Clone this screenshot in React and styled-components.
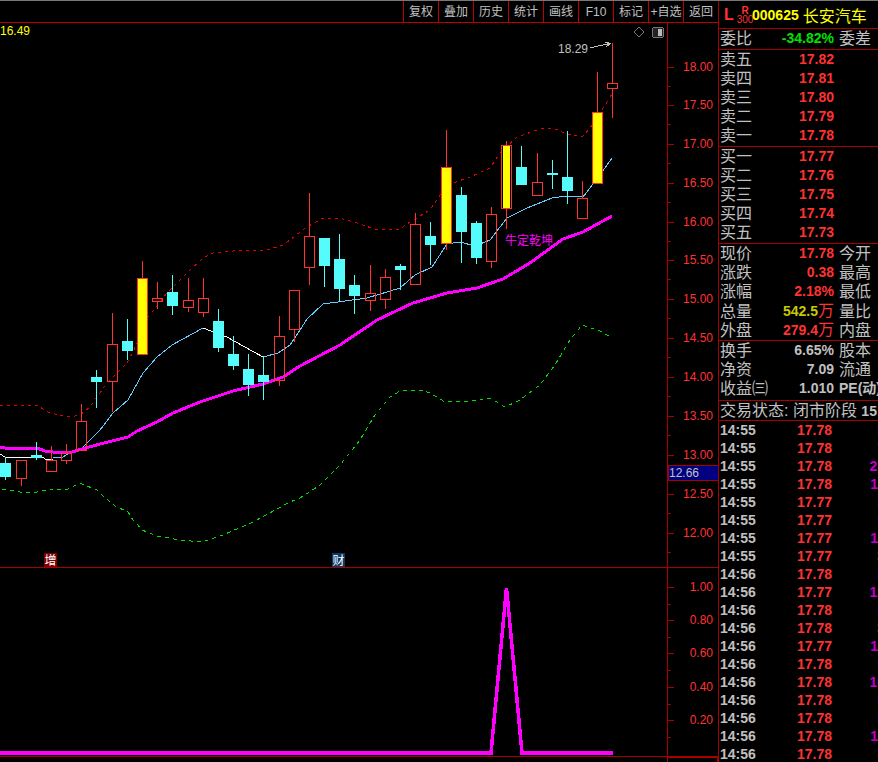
import React from 'react'
import styled, { createGlobalStyle } from 'styled-components'

const SANS = `"Liberation Sans", "Noto Sans CJK SC", sans-serif`
const LINE = '#a80000'
const RED = '#ff3232'
const GREY = '#c0c0c0'

const GlobalStyle = createGlobalStyle`
  html, body { margin: 0; padding: 0; background: #000; }
  body { font-family: ${SANS}; overflow: hidden; }
`

// [x, kind, high, top, bottom, low]  r=hollow red c=cyan y=yellow n=narrow yellow
const candles = [
  [5, 'c', 457, 463, 477, 480], [21, 'r', 460, 460, 478, 486], [36, 'c', 442, 455, 458, 460],
  [51, 'r', 446, 460, 471, 471], [66, 'r', 444, 453, 460, 464], [81, 'r', 404, 421, 450, 450],
  [96, 'c', 370, 377, 382, 408], [112, 'r', 313, 344, 381, 412], [127, 'c', 319, 341, 351, 360],
  [142, 'y', 261, 278, 354, 355], [157, 'r', 282, 298, 301, 309], [172, 'c', 275, 292, 306, 315],
  [188, 'r', 278, 300, 307, 312], [203, 'r', 278, 298, 312, 317], [218, 'c', 309, 321, 348, 352],
  [233, 'c', 336, 354, 366, 370], [248, 'c', 354, 369, 385, 396], [263, 'c', 356, 375, 382, 400],
  [279, 'r', 316, 336, 380, 386], [294, 'r', 290, 290, 329, 342], [309, 'r', 193, 236, 267, 285],
  [324, 'c', 238, 238, 266, 287], [339, 'c', 234, 259, 289, 302], [354, 'c', 275, 285, 296, 314],
  [370, 'r', 265, 293, 300, 311], [385, 'r', 269, 277, 299, 309], [400, 'c', 264, 266, 270, 290],
  [415, 'r', 213, 224, 284, 284], [430, 'c', 222, 236, 245, 265], [446, 'y', 130, 167, 243, 250],
  [461, 'c', 187, 195, 232, 263], [476, 'c', 221, 223, 258, 264], [491, 'r', 207, 214, 261, 268],
  [506, 'n', 141, 145, 208, 229], [521, 'c', 146, 167, 185, 185], [537, 'r', 153, 182, 195, 195],
  [552, 'c', 160, 173, 175, 189], [567, 'c', 131, 177, 191, 204], [582, 'r', 181, 198, 218, 219],
  [597, 'y', 72, 112, 183, 183], [612, 'r', 43, 83, 88, 118],
]

const upperBand = '0,405 37,405 43,409 50,413 70,417 80,415 90,407 107,383 127,363 133,352 148,317 158,305 167,293 187,273 203,258 213,253 233,251 267,250 283,245 290,240 305,228 323,218 340,218 360,224 377,230 400,229 413,220 430,210 440,195 453,183 470,177 490,168 500,153 517,137 540,129 553,128 567,134 582,137 590,128 600,113 612,94'
const lowerBand = '2,489 20,492 37,492 50,489 68,489 80,483 87,486 97,490 103,496 115,506 128,512 133,520 137,524 142,530 157,536 180,540 202,542 223,535 253,522 290,502 300,498 320,485 340,465 360,440 375,415 390,397 400,391 420,390 430,393 445,402 470,401 490,398 505,407 520,400 540,385 555,365 570,340 582,325 600,331 612,338'
const fastLineUp = [
  '53,458 63,457 72,451 82,448 100,430 113,413 128,400 143,373 157,357 172,345 203,328',
  '263,357 278,353 290,345 300,330 307,319 323,304 338,302 367,298 400,288 415,275 432,267 447,244 460,242 475,246 490,240 507,218 527,208 552,198 567,196 583,197 602,172 612,158',
]
const fastLineDown = ['0,454 5,457 43,457 45,459 53,459', '203,328 227,337 243,346 263,357']
const slowLine = '0,447 5,448 37,448 45,451 53,452 72,452 82,449 100,444 128,437 137,431 157,422 173,413 200,402 233,391 263,384 283,377 300,366 340,345 377,320 413,303 447,293 477,288 503,279 530,263 563,239 583,232 612,216'

const priceTicks = [
  ['18.00', 67], ['17.50', 105], ['17.00', 144], ['16.50', 183], ['16.00', 222], ['15.50', 260], ['15.00', 299],
  ['14.50', 338], ['14.00', 377], ['13.50', 416], ['13.00', 455], ['12.50', 494], ['12.00', 533],
]
const subTicks = [['1.00', 587], ['0.80', 620], ['0.60', 653], ['0.40', 687], ['0.20', 720]]

const toolButtons = ['复权', '叠加', '历史', '统计', '画线', 'F10', '标记', '+自选', '返回']
const sells = [['卖五', '17.82'], ['卖四', '17.81'], ['卖三', '17.80'], ['卖二', '17.79'], ['卖一', '17.78']]
const buys = [['买一', '17.77'], ['买二', '17.76'], ['买三', '17.75'], ['买四', '17.74'], ['买五', '17.73']]
const ticks = [
  ['14:55', '17.78', '5'], ['14:55', '17.78', '7'], ['14:55', '17.78', '25'], ['14:55', '17.78', '11'],
  ['14:55', '17.77', '5'], ['14:55', '17.77', '5'], ['14:55', '17.77', '11'], ['14:55', '17.77', '3', true],
  ['14:56', '17.78', '5'], ['14:56', '17.77', '12'], ['14:56', '17.78', '5'], ['14:56', '17.78', '3', true],
  ['14:56', '17.77', '11'], ['14:56', '17.78', '5'], ['14:56', '17.78', '10'], ['14:56', '17.78', '5'],
  ['14:56', '17.78', '5'], ['14:56', '17.78', '11'], ['14:56', '17.78', '7'],
]

const Candle = ({ data }) => {
  const [x, kind, high, top, bottom, low] = data
  const cx = x + 0.5
  if (kind === 'c') {
    return (
      <g>
        <line x1={cx} x2={cx} y1={high} y2={low} stroke="#54fcfc" />
        <rect x={x - 5} y={top} width={11} height={bottom - top} fill="#54fcfc" />
      </g>
    )
  }
  return (
    <g>
      <line x1={cx} x2={cx} y1={high} y2={top} stroke={RED} />
      <line x1={cx} x2={cx} y1={bottom} y2={low} stroke={RED} />
      <rect x={x - 4.5} y={top + 0.5} width={10} height={bottom - top} fill="none" stroke={RED} />
      {kind === 'y' && <rect x={x - 4} y={top + 1} width={9} height={bottom - top - 1} fill="#ffff00" />}
      {kind === 'n' && <rect x={x - 3} y={top + 1} width={7} height={bottom - top - 1} fill="#ffff00" />}
    </g>
  )
}

const AxisTicks = ({ items, minorOffset }) => (
  <g>
    {items.map(([label, y]) => (
      <g key={label}>
        <line x1="668" x2="674" y1={y + 0.5} y2={y + 0.5} stroke={LINE} />
        <line x1="668" x2="671" y1={y + minorOffset + 0.5} y2={y + minorOffset + 0.5} stroke={LINE} />
        <AxisLabel x="713" y={y + 4}>{label}</AxisLabel>
      </g>
    ))}
  </g>
)

const App = () => {
  return (
    <Page>
      <GlobalStyle />
      <ChartColumn>
        <Toolbar>
          {toolButtons.map((b) => <ToolButton key={b}>{b}</ToolButton>)}
        </Toolbar>

        <MainChart viewBox="0 23 718 544" width="718" height="544">
          <Thin points={upperBand} stroke="#e00000" strokeDasharray="3 4" />
          <Thin points={lowerBand} stroke="#00e000" strokeDasharray="4 4" />
          {fastLineUp.map((p) => <Thin key={p} points={p} stroke="#66ccff" />)}
          {fastLineDown.map((p) => <Thin key={p} points={p} stroke="#ffffff" />)}
          <polyline points={slowLine} fill="none" stroke="#ff00ff" strokeWidth="3" />
          {candles.map((c) => <Candle key={c[0]} data={c} />)}

          <line x1="667.5" x2="667.5" y1="23" y2="567" stroke={LINE} />
          <AxisTicks items={priceTicks} minorOffset={19} />
          <rect x="668" y="465.5" width="50" height="15" fill="#000080" stroke={LINE} />
          <ChartText x="669" y="477" fill={GREY}>12.66</ChartText>

          <ChartText x="0" y="35" fill="#ffff00">16.49</ChartText>
          <ChartText x="558" y="53" fill={GREY}>18.29</ChartText>
          <path d="M590 48 L598 46 L610 43.5 M605 42 L610.5 43.5 L606 47" fill="none" stroke={GREY} />
          <path d="M639 27 L644 32 L639 37 L634 32 Z" fill="none" stroke="#777" />
          <rect x="652.5" y="27.5" width="11" height="10" rx="2" fill="#222" stroke="#777" />
          <rect x="658" y="29" width="4" height="7" fill="#bbb" />
          <ChartText x="505" y="245" fill="#ff00ff">牛定乾坤</ChartText>

          <rect x="44" y="553" width="13" height="14" fill="#800000" />
          <ChartText x="44.5" y="565" fill="#fff">增</ChartText>
          <rect x="332" y="553" width="13" height="14" fill="#0a3a6a" />
          <ChartText x="332.5" y="565" fill="#fff">财</ChartText>
        </MainChart>

        <SubChart viewBox="0 568 718 188" width="718" height="188">
          <polyline points="0,753 491,753 506.5,588 522,753 613,753" fill="none" stroke="#ff00ff" strokeWidth="3.5" strokeLinejoin="miter" />
          <line x1="667.5" x2="667.5" y1="568" y2="756" stroke={LINE} />
          <AxisTicks items={subTicks} minorOffset={17} />
        </SubChart>

        <StatusStrip><StatusBox /></StatusStrip>
      </ChartColumn>

      <InfoPanel>
        <Header>
          <MarketL>L</MarketL>
          <RBadge><span>R</span><span>300</span></RBadge>
          <Code>000625</Code>
          <StockName>长安汽车</StockName>
        </Header>

        <Section>
          <QuoteRow>
            <Label>委比</Label><Value $color="#00e000">-34.82%</Value><Label>委差</Label>
          </QuoteRow>
        </Section>

        <Section>
          {sells.map(([l, v]) => (
            <QuoteRow key={l}><Label>{l}</Label><Value>{v}</Value></QuoteRow>
          ))}
        </Section>

        <Section>
          {buys.map(([l, v]) => (
            <QuoteRow key={l}><Label>{l}</Label><Value>{v}</Value></QuoteRow>
          ))}
        </Section>

        <Section>
          <QuoteRow><Label>现价</Label><Value>17.78</Value><Label>今开</Label></QuoteRow>
          <QuoteRow><Label>涨跌</Label><Value>0.38</Value><Label>最高</Label></QuoteRow>
          <QuoteRow><Label>涨幅</Label><Value>2.18%</Value><Label>最低</Label></QuoteRow>
          <QuoteRow><Label>总量</Label><Value $color="#c8c800">542.5<Unit>万</Unit></Value><Label>量比</Label></QuoteRow>
          <QuoteRow><Label>外盘</Label><Value>279.4<Unit>万</Unit></Value><Label>内盘</Label></QuoteRow>
        </Section>

        <Section $bottom={2}>
          <QuoteRow><Label>换手</Label><Value $color={GREY}>6.65%</Value><Label>股本</Label></QuoteRow>
          <QuoteRow><Label>净资</Label><Value $color={GREY}>7.09</Value><Label>流通</Label></QuoteRow>
          <QuoteRow><Label>收益㈢</Label><Value $color={GREY}>1.010</Value><PeLabel>PE(动)</PeLabel></QuoteRow>
        </Section>

        <Section>
          <StatusRow>交易状态: 闭市阶段 <b>15:00</b></StatusRow>
        </Section>

        <TickList>
          {ticks.map(([t, p, v, yellow], i) => (
            <TickRow key={i}>
              <TickTime>{t}</TickTime>
              <TickPrice>{p}</TickPrice>
              <TickVolume $yellow={yellow}>{v}</TickVolume>
            </TickRow>
          ))}
        </TickList>
      </InfoPanel>
    </Page>
  )
}

export default App

const Page = styled.div`
  width: 878px;
  height: 762px;
  box-sizing: border-box;
  border-top: 1px solid #777;
  background: #000;
  display: grid;
  grid-template-columns: 719px 159px;
  overflow: hidden;
`

const ChartColumn = styled.div`
  display: flex;
  flex-direction: column;
  border-right: 1px solid ${LINE};
  min-width: 0;
`

const Toolbar = styled.div`
  height: 21px;
  display: flex;
  justify-content: flex-end;
  border-bottom: 1px solid #c00000;
  flex: none;
`

const ToolButton = styled.div`
  width: 35px;
  box-sizing: border-box;
  border-left: 1px solid #c00000;
  color: ${GREY};
  font-size: 12px;
  line-height: 22px;
  text-align: center;
  white-space: nowrap;
`

const MainChart = styled.svg`
  display: block;
  flex: none;
  shape-rendering: crispEdges;
  border-bottom: 1px solid ${LINE};
`

const SubChart = styled(MainChart)``

const Thin = styled.polyline`
  fill: none;
  stroke-width: 1;
`

const ChartText = styled.text`
  font-family: ${SANS};
  font-size: 12px;
`

const AxisLabel = styled(ChartText)`
  fill: ${RED};
  text-anchor: end;
`

const StatusStrip = styled.div`
  flex: 1;
  display: flex;
  justify-content: flex-end;
`

const StatusBox = styled.div`
  width: 49px;
  border: 1px solid ${LINE};
  border-bottom: 0;
`

const InfoPanel = styled.div`
  display: flex;
  flex-direction: column;
  overflow: hidden;
  min-width: 0;
`

const Header = styled.div`
  height: 27px;
  flex: none;
  display: flex;
  align-items: center;
  border-bottom: 1px solid ${LINE};
  padding-left: 5px;
`

const MarketL = styled.span`
  color: ${RED};
  font-size: 16px;
  font-weight: 700;
  width: 13px;
`

const RBadge = styled.div`
  display: flex;
  flex-direction: column;
  align-items: center;
  color: ${RED};
  font-size: 10px;
  line-height: 9px;
  width: 16px;
  span:first-child { font-weight: 700; }
`

const Code = styled.span`
  color: #ffff00;
  font-size: 14px;
  font-weight: 700;
  margin-left: -1px;
`

const StockName = styled.span`
  color: #ffff00;
  font-size: 16px;
  margin-left: 4px;
  white-space: nowrap;
`

const Section = styled.div`
  flex: none;
  border-bottom: 1px solid ${LINE};
  padding-bottom: ${(p) => p.$bottom || 1}px;
`

const QuoteRow = styled.div`
  height: 19px;
  display: grid;
  grid-template-columns: 66px 53px 60px;
  align-items: center;
  padding-left: 1px;
  white-space: nowrap;
`

const Label = styled.span`
  color: ${GREY};
  font-size: 16px;
  line-height: 19px;
`

const Value = styled.span`
  color: ${(p) => p.$color || RED};
  font-size: 14px;
  font-weight: 700;
  line-height: 19px;
  text-align: right;
  justify-self: end;
  margin-right: 5px;
  white-space: nowrap;
`

const Unit = styled.span`
  color: ${RED};
  font-size: 16px;
  font-weight: 400;
`

const PeLabel = styled(Label)`
  font-size: 14px;
  font-weight: 700;
`

const StatusRow = styled.div`
  height: 18px;
  color: ${GREY};
  font-size: 16px;
  line-height: 19px;
  padding-left: 1px;
  white-space: nowrap;
  b { font-size: 14px; }
`

const TickList = styled.div`
  display: flex;
  flex-direction: column;
  min-height: 0;
`

const TickRow = styled.div`
  height: 18px;
  flex: none;
  display: grid;
  grid-template-columns: 60px 52px 53px;
  align-items: center;
  padding-left: 1px;
  font-size: 14px;
  font-weight: 700;
  white-space: nowrap;
`

const TickTime = styled.span`
  color: ${GREY};
`

const TickPrice = styled.span`
  color: ${RED};
  text-align: right;
`

const TickVolume = styled.span`
  color: ${(p) => (p.$yellow ? '#c8c800' : '#c000c0')};
  text-align: right;
`
